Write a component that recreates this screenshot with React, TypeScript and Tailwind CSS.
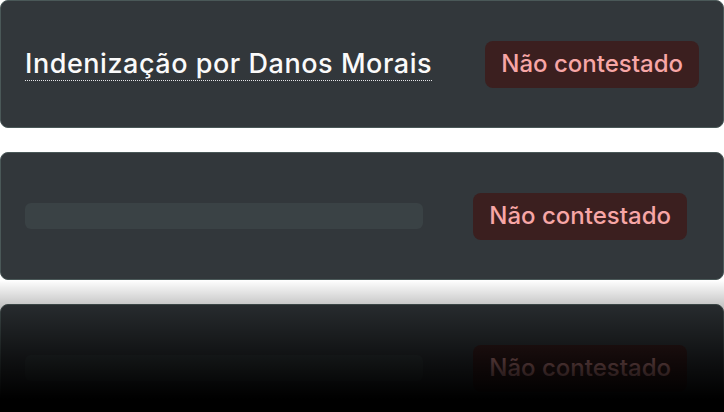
const CARDS = [
  { title: 'Indenização por Danos Morais', status: 'Não contestado', loading: false },
  { title: '', status: 'Não contestado', loading: true },
  { title: '', status: 'Não contestado', loading: true },
];

function StatusBadge({ label }: { label: string }) {
  return (
    <span className="flex h-[47px] shrink-0 items-center rounded-lg bg-[#3b1f1f] px-4 text-[24px] font-medium text-[#f7a6a6]">
      {label}
    </span>
  );
}

export default function App() {
  return (
    <div className="relative h-[412px] w-[724px] overflow-hidden bg-white font-['Inter',sans-serif]">
      <div className="flex flex-col gap-6">
        {CARDS.map((card, i) => (
          <div
            key={i}
            className={`flex h-32 shrink-0 items-center justify-between rounded-lg border border-[#4a5858] bg-[#32373b] pl-6 ${
              card.loading ? 'pr-9' : 'pr-6'
            }`}
          >
            {card.loading ? (
              <div className="h-[26px] w-[398px] rounded-md bg-[#3a4245]" />
            ) : (
              <span className="text-[27px] font-medium leading-9 tracking-[0.02em] text-[#fafafa] underline decoration-[#e4e4e7] decoration-dotted decoration-1 underline-offset-[7px]">
                {card.title}
              </span>
            )}
            <StatusBadge label={card.status} />
          </div>
        ))}
      </div>

      {/* fade out */}
      <div className="pointer-events-none absolute inset-x-0 bottom-0 h-[132px] bg-gradient-to-b from-transparent via-black/70 via-60% to-black to-90%" />
    </div>
  );
}
